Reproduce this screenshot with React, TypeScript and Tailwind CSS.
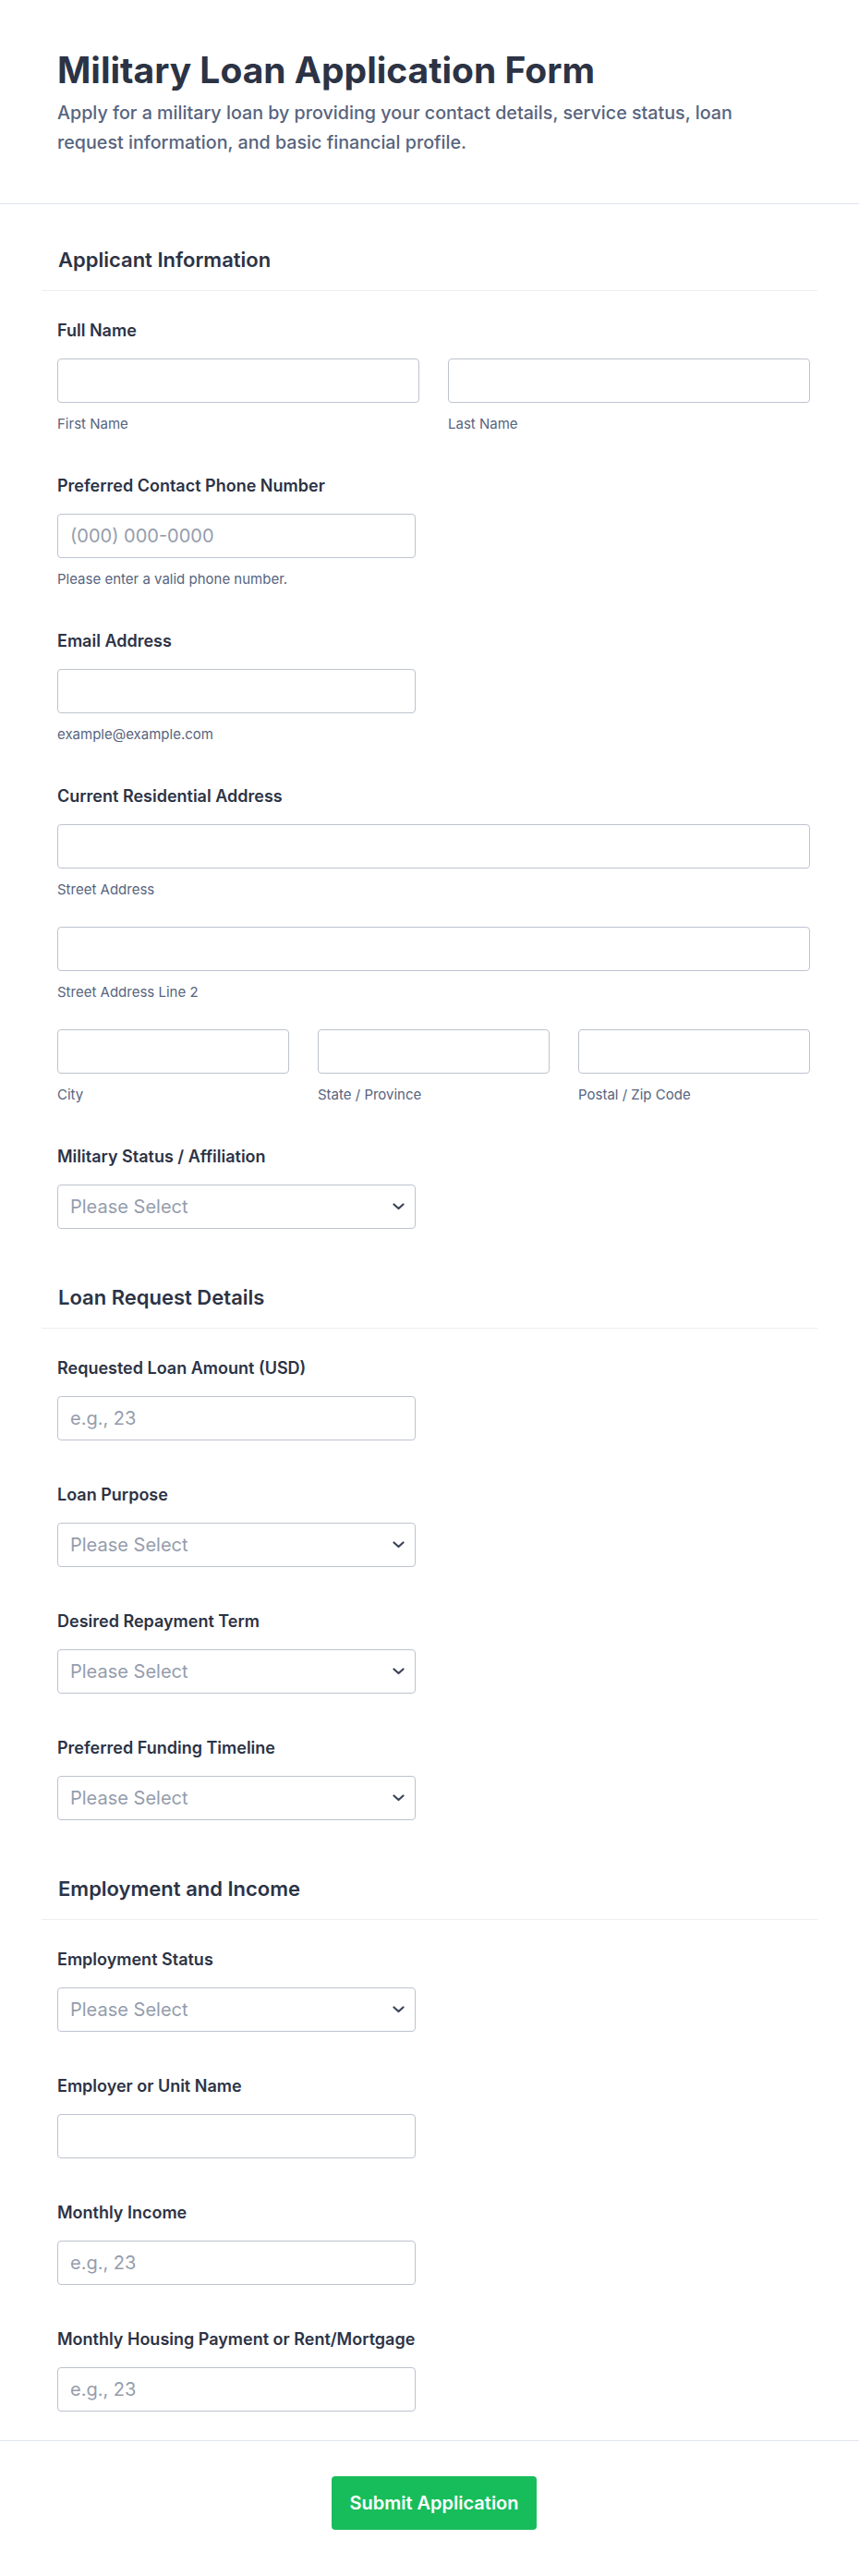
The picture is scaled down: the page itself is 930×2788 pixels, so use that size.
import type { ReactNode } from 'react';

const font = { fontFamily: 'Inter, "Noto Sans", sans-serif' };

function Label({ children }: { children: ReactNode }) {
  return (
    <label className="block text-[18px] leading-[24px] font-semibold text-[#2c3345] mb-[18px]">
      {children}
    </label>
  );
}

function SubLabel({ children }: { children: ReactNode }) {
  return <p className="mt-[14px] text-[15px] leading-[17px] text-[#57647e]">{children}</p>;
}

function TextInput({ placeholder, className = '' }: { placeholder?: string; className?: string }) {
  return (
    <input
      type="text"
      placeholder={placeholder}
      className={`block h-[48px] rounded-[4px] border border-[#bec3d0] bg-white px-[13px] text-[20px] text-[#2c3345] placeholder:text-[#959dac] outline-none ${className}`}
      style={font}
    />
  );
}

function SelectInput() {
  return (
    <div className="relative w-[388px]">
      <select
        defaultValue=""
        className="block h-[48px] w-full appearance-none rounded-[4px] border border-[#bec3d0] bg-white px-[13px] text-[20px] text-[#959dac] outline-none"
        style={font}
      >
        <option value="" disabled>
          Please Select
        </option>
      </select>
      <svg
        className="pointer-events-none absolute right-[12px] top-1/2 -translate-y-1/2"
        width="13"
        height="8"
        viewBox="0 0 13 8"
        fill="none"
      >
        <path d="M1.5 1.5L6.5 6L11.5 1.5" stroke="#3b4357" strokeWidth="2.2" strokeLinecap="round" strokeLinejoin="round" />
      </svg>
    </div>
  );
}

function Section({ title, children }: { title: string; children: ReactNode }) {
  return (
    <section className="pt-[46px]">
      <h2 className="border-b border-[#eceef2] pb-[19px] pl-[18px] text-[22px] leading-[28px] font-semibold text-[#2c3345]">
        {title}
      </h2>
      <div className="flex flex-col gap-[47px] pl-[17px] pr-[8px] pt-[31px] pb-[14px]">{children}</div>
    </section>
  );
}

export default function App() {
  return (
    <div className="min-h-screen w-full bg-white text-[#2c3345]" style={font}>
      <header className="border-b border-[#dfe3ea] px-[62px] pt-[52px] pb-[50px]">
        <h1 className="text-[39px] leading-[48px] font-bold text-[#2c3345]">Military Loan Application Form</h1>
        <p className="mt-[6px] max-w-[780px] text-[19.7px] leading-[32px] font-medium text-[#57647e]">
          Apply for a military loan by providing your contact details, service status, loan request information, and
          basic financial profile.
        </p>
      </header>

      <main className="px-[45px] pb-[17px]">
        <Section title="Applicant Information">
          <div>
            <Label>Full Name</Label>
            <div className="grid grid-cols-2 gap-[31px]">
              <div>
                <TextInput className="w-full" />
                <SubLabel>First Name</SubLabel>
              </div>
              <div>
                <TextInput className="w-full" />
                <SubLabel>Last Name</SubLabel>
              </div>
            </div>
          </div>

          <div>
            <Label>Preferred Contact Phone Number</Label>
            <TextInput className="w-[388px]" placeholder="(000) 000-0000" />
            <SubLabel>Please enter a valid phone number.</SubLabel>
          </div>

          <div>
            <Label>Email Address</Label>
            <TextInput className="w-[388px]" />
            <SubLabel>example@example.com</SubLabel>
          </div>

          <div>
            <Label>Current Residential Address</Label>
            <div className="flex flex-col gap-[32px]">
              <div>
                <TextInput className="w-full" />
                <SubLabel>Street Address</SubLabel>
              </div>
              <div>
                <TextInput className="w-full" />
                <SubLabel>Street Address Line 2</SubLabel>
              </div>
              <div className="grid grid-cols-3 gap-[31px]">
                <div>
                  <TextInput className="w-full" />
                  <SubLabel>City</SubLabel>
                </div>
                <div>
                  <TextInput className="w-full" />
                  <SubLabel>State / Province</SubLabel>
                </div>
                <div>
                  <TextInput className="w-full" />
                  <SubLabel>Postal / Zip Code</SubLabel>
                </div>
              </div>
            </div>
          </div>

          <div>
            <Label>Military Status / Affiliation</Label>
            <SelectInput />
          </div>
        </Section>

        <Section title="Loan Request Details">
          <div>
            <Label>Requested Loan Amount (USD)</Label>
            <TextInput className="w-[388px]" placeholder="e.g., 23" />
          </div>
          <div>
            <Label>Loan Purpose</Label>
            <SelectInput />
          </div>
          <div>
            <Label>Desired Repayment Term</Label>
            <SelectInput />
          </div>
          <div>
            <Label>Preferred Funding Timeline</Label>
            <SelectInput />
          </div>
        </Section>

        <Section title="Employment and Income">
          <div>
            <Label>Employment Status</Label>
            <SelectInput />
          </div>
          <div>
            <Label>Employer or Unit Name</Label>
            <TextInput className="w-[388px]" />
          </div>
          <div>
            <Label>Monthly Income</Label>
            <TextInput className="w-[388px]" placeholder="e.g., 23" />
          </div>
          <div>
            <Label>Monthly Housing Payment or Rent/Mortgage</Label>
            <TextInput className="w-[388px]" placeholder="e.g., 23" />
          </div>
        </Section>
      </main>

      <footer className="flex justify-center border-t border-[#e3e7ee] pt-[38px] pb-[51px] pl-[10px]">
        <button
          type="button"
          className="h-[58px] w-[222px] rounded-[4px] bg-[#18bd5b] text-[20px] font-semibold text-white"
          style={font}
        >
          Submit Application
        </button>
      </footer>
    </div>
  );
}
